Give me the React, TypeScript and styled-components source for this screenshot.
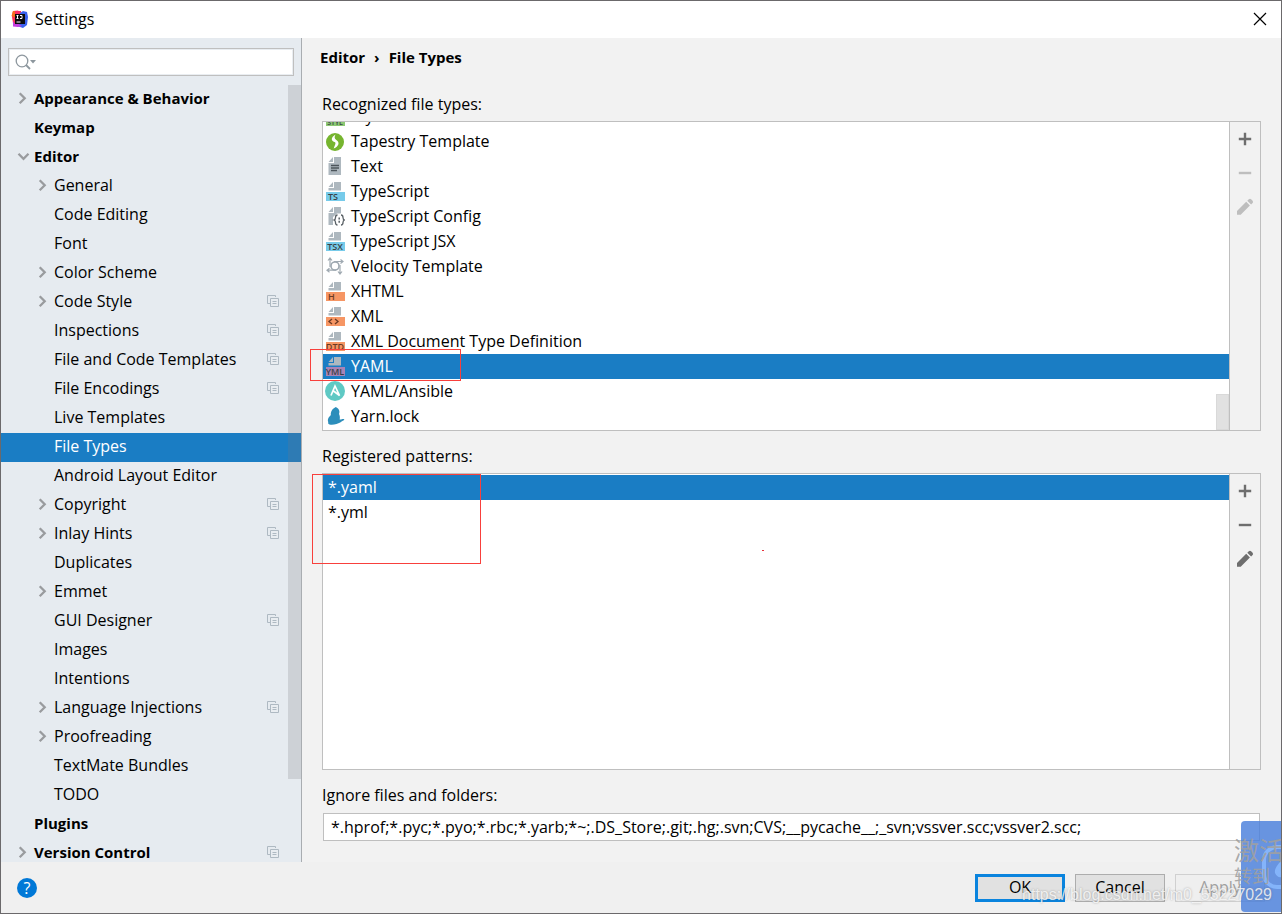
import React, { ReactNode } from "react";
import styled, { createGlobalStyle, css } from "styled-components";

const blue = "#1a7dc4";
const line = "#bfbfbf";

const GlobalStyle = createGlobalStyle`
  * { box-sizing: border-box; }
  body { margin: 0; }
  body, button, input {
    font-family: "Open Sans", "Noto Sans", "Noto Sans CJK SC", sans-serif;
    font-size: 16px;
    color: #000;
  }
`;

const Window = styled.div`
  position: relative;
  display: flex;
  flex-direction: column;
  height: 100vh;
  border: 1px solid #6b696b;
  background: #f0f0f0;
  overflow: hidden;
`;

const TitleBar = styled.header`
  display: flex;
  align-items: center;
  flex: none;
  gap: 6px;
  height: 37px;
  padding: 0 13px 2px 10px;
  background: #fff;
`;

const WindowTitle = styled.h1`
  flex: 1;
  margin: 0;
  font-size: 16px;
  font-weight: 400;
`;

const IconButton = styled.button`
  display: flex;
  align-items: center;
  justify-content: center;
  padding: 0;
  border: 0;
  background: none;
`;

const Body = styled.div`
  display: flex;
  flex: 1;
  min-height: 0;
`;

const Sidebar = styled.nav`
  position: relative;
  display: flex;
  flex-direction: column;
  flex: none;
  width: 301px;
  padding-top: 10px;
  border-right: 1px solid #a9adb1;
  background: #e6ebf0;
  overflow: hidden;
`;

const SearchField = styled.label`
  display: flex;
  align-items: center;
  flex: none;
  height: 28px;
  margin: 0 7px 9px;
  padding-left: 6px;
  border: 1px solid ${line};
  box-shadow: inset 0 0 0 1px #e9edf1;
  background: #fff;
`;

const SearchInput = styled.input`
  flex: 1;
  min-width: 0;
  border: 0;
  outline: 0;
  background: none;
`;

const Tree = styled.ul`
  position: relative;
  margin: 0;
  padding: 0;
  list-style: none;
`;

const TreeRow = styled.button<{ $level: number; $selected?: boolean }>`
  display: flex;
  align-items: center;
  width: 100%;
  height: 29px;
  padding: 0 22px 3px ${(p) => (p.$level ? 33 : 13)}px;
  border: 0;
  background: ${(p) => (p.$selected ? blue : "none")};
  color: ${(p) => (p.$selected ? "#fff" : "#000")};
  font-size: ${(p) => (p.$level ? 16 : 15)}px;
  font-weight: ${(p) => (p.$level ? 400 : 700)};
  text-align: left;
  white-space: nowrap;
`;

const ArrowSlot = styled.span`
  display: flex;
  flex: none;
  width: 20px;
`;

const TreeLabel = styled.span`
  flex: 1;
`;

const TreeScrollbar = styled.div`
  position: absolute;
  top: 47px;
  right: 0;
  bottom: 83px;
  width: 13px;
  background: rgba(120, 120, 125, 0.22);
`;

const Main = styled.main`
  display: flex;
  flex-direction: column;
  flex: 1;
  min-width: 0;
  background: #f2f2f2;
`;

const Breadcrumb = styled.div`
  display: flex;
  align-items: center;
  flex: none;
  gap: 9px;
  height: 39px;
  padding: 0 0 2px 18px;
  font-size: 15px;
  font-weight: 700;
`;

const Content = styled.div`
  display: flex;
  flex-direction: column;
  flex: 1;
  min-height: 0;
  padding: 15px 20px 21px;
`;

const Caption = styled.label`
  flex: none;
  height: 25px;
  margin-bottom: 4px;
  line-height: 24px;
`;

const ListPanel = styled.section<{ $fill?: boolean }>`
  position: relative;
  display: flex;
  margin-bottom: 13px;
  border: 1px solid ${line};
  ${(p) =>
    p.$fill
      ? css`
          flex: 1;
          min-height: 80px;
        `
      : css`
          flex: none;
          height: 310px;
        `}
`;

const List = styled.ul<{ $scrolledToEnd?: boolean }>`
  position: relative;
  display: flex;
  flex-direction: column;
  flex: 1;
  justify-content: ${(p) => (p.$scrolledToEnd ? "flex-end" : "flex-start")};
  margin: 0;
  padding: 1px 0;
  background: #fff;
  list-style: none;
  overflow: hidden;
`;

const ListRow = styled.li<{ $selected?: boolean; $inset: number }>`
  display: flex;
  align-items: center;
  flex: none;
  gap: 6px;
  height: 25px;
  padding: 0 0 1px ${(p) => p.$inset}px;
  line-height: 22px;
  background: ${(p) => (p.$selected ? blue : "none")};
  color: ${(p) => (p.$selected ? "#fff" : "#000")};
`;

const ListScrollbar = styled.div`
  position: absolute;
  right: 0;
  bottom: 0;
  width: 13px;
  height: 36px;
  border: 1px solid #d9d9d9;
  background: #e1e1e1;
`;

const ListTools = styled.div`
  display: flex;
  flex-direction: column;
  flex: none;
  width: 31px;
  border-left: 1px solid ${line};
`;

const ToolButton = styled(IconButton)`
  height: 34px;
  color: #6e6e6e;
  &:disabled {
    color: #bebebe;
  }
`;

const TextField = styled.input`
  flex: none;
  height: 28px;
  margin: 1px 1px 0;
  padding: 0 7px;
  border: 1px solid ${line};
  outline: 0;
  background: #fff;
`;

const Footer = styled.footer`
  display: flex;
  align-items: center;
  flex: none;
  gap: 10px;
  height: 51px;
  padding: 1px 16px 0;
`;

const HelpButton = styled(IconButton)`
  width: 20px;
  height: 20px;
  margin-right: auto;
  border-radius: 50%;
  background: #0078d7;
  color: #fff;
`;

const DialogButton = styled.button<{ $primary?: boolean }>`
  width: 90px;
  height: 28px;
  padding: 0 0 2px;
  border: ${(p) => (p.$primary ? "3px solid #0a84de" : "1px solid #adadad")};
  background: #e1e1e1;
  line-height: 20px;
  &:disabled {
    border-color: #d0d0d0;
    background: #efefef;
    color: #a0a0a0;
  }
`;

const Highlight = styled.div<{ $box: "type" | "patterns" }>`
  position: absolute;
  border: 1px solid #f8403c;
  pointer-events: none;
  ${(p) =>
    p.$box === "type"
      ? css`
          top: 227px;
          left: -13px;
          width: 151px;
          height: 32px;
        `
      : css`
          top: 0;
          left: -11px;
          width: 169px;
          height: 90px;
        `}
`;

const RedDot = styled.div`
  position: absolute;
  top: 76px;
  left: 439px;
  width: 2px;
  height: 1px;
  background: #e8303a;
`;

const FloatingTab = styled.div`
  position: absolute;
  right: -1px;
  bottom: 1px;
  width: 41px;
  height: 91px;
  border-radius: 4px 0 0 4px;
  background: rgba(73, 127, 220, 0.82);
  overflow: hidden;
`;

const Activation = styled.div`
  position: absolute;
  right: -1px;
  bottom: 26px;
  width: 48px;
  color: rgba(160, 160, 160, 0.9);
  font-family: "Noto Sans CJK SC", sans-serif;
  white-space: nowrap;
  overflow: hidden;
`;

const ActivationTitle = styled.div`
  font-size: 25px;
  line-height: 28px;
`;

const ActivationHint = styled.div`
  font-size: 18px;
  line-height: 24px;
`;

const Watermark = styled.div`
  position: absolute;
  right: 9px;
  bottom: 8px;
  color: rgba(255, 255, 255, 0.8);
  font-family: "Liberation Sans", sans-serif;
  font-size: 16px;
  line-height: 20px;
  text-shadow: 0 0 2px rgba(90, 90, 90, 0.5);
`;

function AppLogo() {
  return (
    <svg width="18" height="18" viewBox="0 0 18 18" aria-hidden="true">
      <path d="M1 5 2 1l5-.5 3 3-4 9-4 1z" fill="#fc4a48" />
      <path d="M.5 6 2 1l4 1-3 6z" fill="#f9701d" />
      <path d="M4 1h6v4H4z" fill="#fe2c63" />
      <path d="m9 3 3-2 4 1 1 5-1 8-4 3-6-2z" fill="#3a62ee" />
      <path d="m2 11 4 2 5 3-4 1-5-.5z" fill="#c13de0" />
      <path d="m1 6 3 2v6l-2-3z" fill="#fe315d" />
      <rect x="4" y="4" width="10" height="10" fill="#0b0b0f" />
      <path d="M5.500 5.500h2M6.500 5.500v3M5.500 8.500h2M9 5.500h2v3H9M5.500 12h4" stroke="#fff" fill="none" />
    </svg>
  );
}

function Chevron({ open }: { open?: boolean }) {
  return (
    <svg width="16" height="16" viewBox="0 0 16 16" fill="none" stroke="#999b9e" strokeWidth="2.300" aria-hidden="true">
      {open ? <path d="m4.500 5.800 5 5 5-5" /> : <path d="m5.700 3.200 5 5-5 5" />}
    </svg>
  );
}

function ProjectScope() {
  return (
    <svg width="12" height="12" viewBox="0 0 12 12" fill="none" stroke="#aeb9c2" aria-hidden="true">
      <path d="M3 8.500H.5v-8h8V2" />
      <path d="M3.500 3.500h8v8h-8z" fill="#e9edf1" />
      <path d="M5.500 6.500h4M5.500 8.500h4" />
    </svg>
  );
}

const PAGE = "M3.500 6 8 1v5zM9 1h7v8.500H3.500V7H9z";

function Tagged({ tag, color, ink = "#3a4247" }: { tag: string; color: string; ink?: string }) {
  return (
    <svg width="20" height="20" viewBox="0 0 20 20" aria-hidden="true">
      <path d={PAGE} fill="#aeb8bf" />
      <path d="M1 11h19v9H1z" fill={color} />
      {tag === "<>" ? (
        <path d="M7 13 4 15.500 7 18M10 13l3 2.500-3 2.500" fill="none" stroke={ink} strokeWidth="1.300" />
      ) : (
        <text
          x={tag.length > 2 ? 10 : 3}
          y="19"
          textAnchor={tag.length > 2 ? "middle" : "start"}
          fontFamily="Open Sans, sans-serif"
          fontSize={tag.length > 3 ? 7 : 9}
          fontWeight="600"
          fill={ink}
        >
          {tag}
        </text>
      )}
    </svg>
  );
}

function Glyph({ children }: { children: ReactNode }) {
  return (
    <svg width="20" height="20" viewBox="0 0 20 20" fill="none" aria-hidden="true">
      {children}
    </svg>
  );
}

const PAGE_FULL = "M3.500 6 8 1v5zM9 1h7v18H3.500V7H9z";

const tapestryIcon = (
  <Glyph>
    <circle cx="10" cy="11" r="9" fill="#76b52f" />
    <path d="M10.500 3.500c-5 3-4.500 6.500-1 7.500 2 .8.500 3-.8 6.500 5-2 6.500-6 2.600-8.500C9 7.500 9.500 5.500 10.500 3.500z" fill="#fff" />
  </Glyph>
);
const textIcon = (
  <Glyph>
    <path d={PAGE_FULL} fill="#aeb8bf" />
    <path d="M6 9.500h8M6 12h8M6 14.500h6" stroke="#4c555b" strokeWidth="1.300" />
  </Glyph>
);
const configIcon = (
  <Glyph>
    <path d="M3.500 6 8 1v5zM9 1h7v6.500h-4L8 11v8H3.500V7H9z" fill="#aeb8bf" />
    <path
      d="M12.500 9c-2 0-2 1-2 2.500s0 2-1.500 2.500c1.500.5 1.500 1 1.500 2.500s0 2.500 2 2.500M16 9c2 0 2 1 2 2.500s0 2 1.500 2.500c-1.500.5-1.500 1-1.500 2.500s0 2.500-2 2.500"
      stroke="#5a6166"
      strokeWidth="1.300"
    />
    <path d="M14.200 11.500v2M14.200 14.800v2" stroke="#5a6166" strokeWidth="1.500" />
  </Glyph>
);
const velocityIcon = (
  <Glyph>
    <circle cx="10" cy="10" r="4" stroke="#9fa9b1" strokeWidth="1.600" />
    <path
      d="M5 2v9M3 4.500 5 2l2 2.500M9 5.500h9M15.500 3.500l2.500 2-2.500 2M15 9v9M13 15.500l2 2.500 2-2.500M11 14.200H2M4.500 12.200 2 14.200l2.500 2"
      stroke="#9fa9b1"
      strokeWidth="1.200"
    />
  </Glyph>
);
const ansibleIcon = (
  <Glyph>
    <circle cx="10" cy="10" r="10" fill="#5fc9c4" />
    <path d="m6 14.500 4-9.500 4.500 9.500L8.500 10" stroke="#fff" strokeWidth="1.700" />
  </Glyph>
);
const yarnIcon = (
  <Glyph>
    <path
      d="M8.500 2.500c.7-.3 1.600-.9 2.300-1.500.8.500 1.600.8 2.200 1.500 1.500 1.500 1.800 3.500 1 5.500.6 1.300 1.200 3 .7 5.500 1.500.3 2.500-.8 4-.5.800.3.700 1 .1 1.300-2.600 1.200-4.500 3.200-7.300 3.800-2.300.5-4.600.9-7 .4-1.400-.5-1.600-1.700-1.200-2.300-1-2-.3-4.200 1.200-5.700.6-.6 1-1 1.300-1.500C5.500 6.500 6.500 4 8.500 2.500z"
      fill="#2c8ebb"
    />
  </Glyph>
);

const orange = "#f69664";
const fileTypes: { name: string; icon: ReactNode }[] = [
  { name: "Stylus", icon: <Tagged tag="STYL" color="#8cc873" /> },
  { name: "Tapestry Template", icon: tapestryIcon },
  { name: "Text", icon: textIcon },
  { name: "TypeScript", icon: <Tagged tag="TS" color="#77cbea" /> },
  { name: "TypeScript Config", icon: configIcon },
  { name: "TypeScript JSX", icon: <Tagged tag="TSX" color="#77cbea" /> },
  { name: "Velocity Template", icon: velocityIcon },
  { name: "XHTML", icon: <Tagged tag="H" color={orange} ink="#6b3a24" /> },
  { name: "XML", icon: <Tagged tag="<>" color={orange} ink="#6b3a24" /> },
  { name: "XML Document Type Definition", icon: <Tagged tag="DTD" color={orange} ink="#6b3a24" /> },
  { name: "YAML", icon: <Tagged tag="YML" color="#a883b5" /> },
  { name: "YAML/Ansible", icon: ansibleIcon },
  { name: "Yarn.lock", icon: yarnIcon },
];

type Category = { name: string; level: number; arrow?: "open" | "closed"; scoped?: boolean };
const tree: Category[] = [
  { name: "Appearance & Behavior", level: 0, arrow: "closed" },
  { name: "Keymap", level: 0 },
  { name: "Editor", level: 0, arrow: "open" },
  { name: "General", level: 1, arrow: "closed" },
  { name: "Code Editing", level: 1 },
  { name: "Font", level: 1 },
  { name: "Color Scheme", level: 1, arrow: "closed" },
  { name: "Code Style", level: 1, arrow: "closed", scoped: true },
  { name: "Inspections", level: 1, scoped: true },
  { name: "File and Code Templates", level: 1, scoped: true },
  { name: "File Encodings", level: 1, scoped: true },
  { name: "Live Templates", level: 1 },
  { name: "File Types", level: 1 },
  { name: "Android Layout Editor", level: 1 },
  { name: "Copyright", level: 1, arrow: "closed", scoped: true },
  { name: "Inlay Hints", level: 1, arrow: "closed", scoped: true },
  { name: "Duplicates", level: 1 },
  { name: "Emmet", level: 1, arrow: "closed" },
  { name: "GUI Designer", level: 1, scoped: true },
  { name: "Images", level: 1 },
  { name: "Intentions", level: 1 },
  { name: "Language Injections", level: 1, arrow: "closed", scoped: true },
  { name: "Proofreading", level: 1, arrow: "closed" },
  { name: "TextMate Bundles", level: 1 },
  { name: "TODO", level: 1 },
  { name: "Plugins", level: 0 },
  { name: "Version Control", level: 0, arrow: "closed", scoped: true },
];

function Tools({ editable }: { editable: boolean }) {
  return (
    <ListTools>
      <ToolButton aria-label="Add">
        <svg width="14" height="14" viewBox="0 0 14 14" stroke="currentColor" strokeWidth="2.400">
          <path d="M7 .8v12.400M.8 7h12.400" />
        </svg>
      </ToolButton>
      <ToolButton aria-label="Remove" disabled={!editable}>
        <svg width="14" height="14" viewBox="0 0 14 14" stroke="currentColor" strokeWidth="2.400">
          <path d="M.8 7h12.400" />
        </svg>
      </ToolButton>
      <ToolButton aria-label="Edit" disabled={!editable}>
        <svg width="18" height="18" viewBox="0 0 18 18" fill="currentColor">
          <path d="M1 13 10.200 3.800 13.900 7.500 4.700 16.700H1zM11.300 2.700l1.500-1.500q1.200-1 2.300 0l1.500 1.500q1 1.200 0 2.300l-1.500 1.500z" />
        </svg>
      </ToolButton>
    </ListTools>
  );
}

export default function App() {
  return (
    <Window>
      <GlobalStyle />
      <TitleBar>
        <AppLogo />
        <WindowTitle>Settings</WindowTitle>
        <IconButton aria-label="Close">
          <svg width="16" height="16" viewBox="0 0 16 16" stroke="#000" strokeWidth="1.200">
            <path d="m2 2 12 12M14 2 2 14" />
          </svg>
        </IconButton>
      </TitleBar>
      <Body>
        <Sidebar aria-label="Settings categories">
          <SearchField>
            <svg width="22" height="18" viewBox="0 0 22 18" fill="none" stroke="#8d979e" strokeWidth="1.300" aria-hidden="true">
              <circle cx="7" cy="8" r="5.800" />
              <path d="m11 12 4 4" strokeWidth="1.800" />
              <path d="M15 7h6l-3 3.500z" fill="#8d979e" stroke="none" />
            </svg>
            <SearchInput aria-label="Search settings" />
          </SearchField>
          <Tree>
            {tree.map((n) => (
              <li key={n.name}>
                <TreeRow $level={n.level} $selected={n.name === "File Types"}>
                  <ArrowSlot>{n.arrow && <Chevron open={n.arrow === "open"} />}</ArrowSlot>
                  <TreeLabel>{n.name}</TreeLabel>
                  {n.scoped && <ProjectScope />}
                </TreeRow>
              </li>
            ))}
          </Tree>
          <TreeScrollbar />
        </Sidebar>
        <Main>
          <Breadcrumb>
            <span>Editor</span>
            <span>›</span>
            <span>File Types</span>
          </Breadcrumb>
          <Content>
            <Caption as="div" id="types-label">Recognized file types:</Caption>
            <ListPanel>
              <List $scrolledToEnd role="listbox" aria-labelledby="types-label">
                {fileTypes.map((f) => (
                  <ListRow key={f.name} $inset={2} $selected={f.name === "YAML"} role="option" aria-selected={f.name === "YAML"}>
                    {f.icon}
                    <span>{f.name}</span>
                  </ListRow>
                ))}
                <ListScrollbar as="li" role="presentation" />
              </List>
              <Tools editable={false} />
              <Highlight $box="type" />
            </ListPanel>
            <Caption as="div" id="patterns-label">Registered patterns:</Caption>
            <ListPanel $fill>
              <List role="listbox" aria-labelledby="patterns-label">
                <ListRow $inset={5} $selected role="option" aria-selected>*.yaml</ListRow>
                <ListRow $inset={5} role="option" aria-selected={false}>*.yml</ListRow>
              </List>
              <Tools editable />
              <Highlight $box="patterns" />
              <RedDot />
            </ListPanel>
            <Caption htmlFor="ignored">Ignore files and folders:</Caption>
            <TextField
              id="ignored"
              defaultValue="*.hprof;*.pyc;*.pyo;*.rbc;*.yarb;*~;.DS_Store;.git;.hg;.svn;CVS;__pycache__;_svn;vssver.scc;vssver2.scc;"
            />
          </Content>
        </Main>
      </Body>
      <Footer>
        <HelpButton aria-label="Help">?</HelpButton>
        <DialogButton $primary>OK</DialogButton>
        <DialogButton>Cancel</DialogButton>
        <DialogButton disabled>Apply</DialogButton>
      </Footer>
      <FloatingTab>
        <svg width="41" height="91" viewBox="0 0 41 91" aria-hidden="true">
          <rect x="23" y="26" width="40" height="40" rx="13" fill="none" stroke="#84b4fa" strokeWidth="4" />
          <path d="M41 38c-3 5-8 9-7 14q2 5 7 4z" fill="#84b4fa" />
        </svg>
      </FloatingTab>
      <Activation>
        <ActivationTitle>激活</ActivationTitle>
        <ActivationHint>转到“设</ActivationHint>
      </Activation>
      <Watermark>https://blog.csdn.net/m0_53227029</Watermark>
    </Window>
  );
}
